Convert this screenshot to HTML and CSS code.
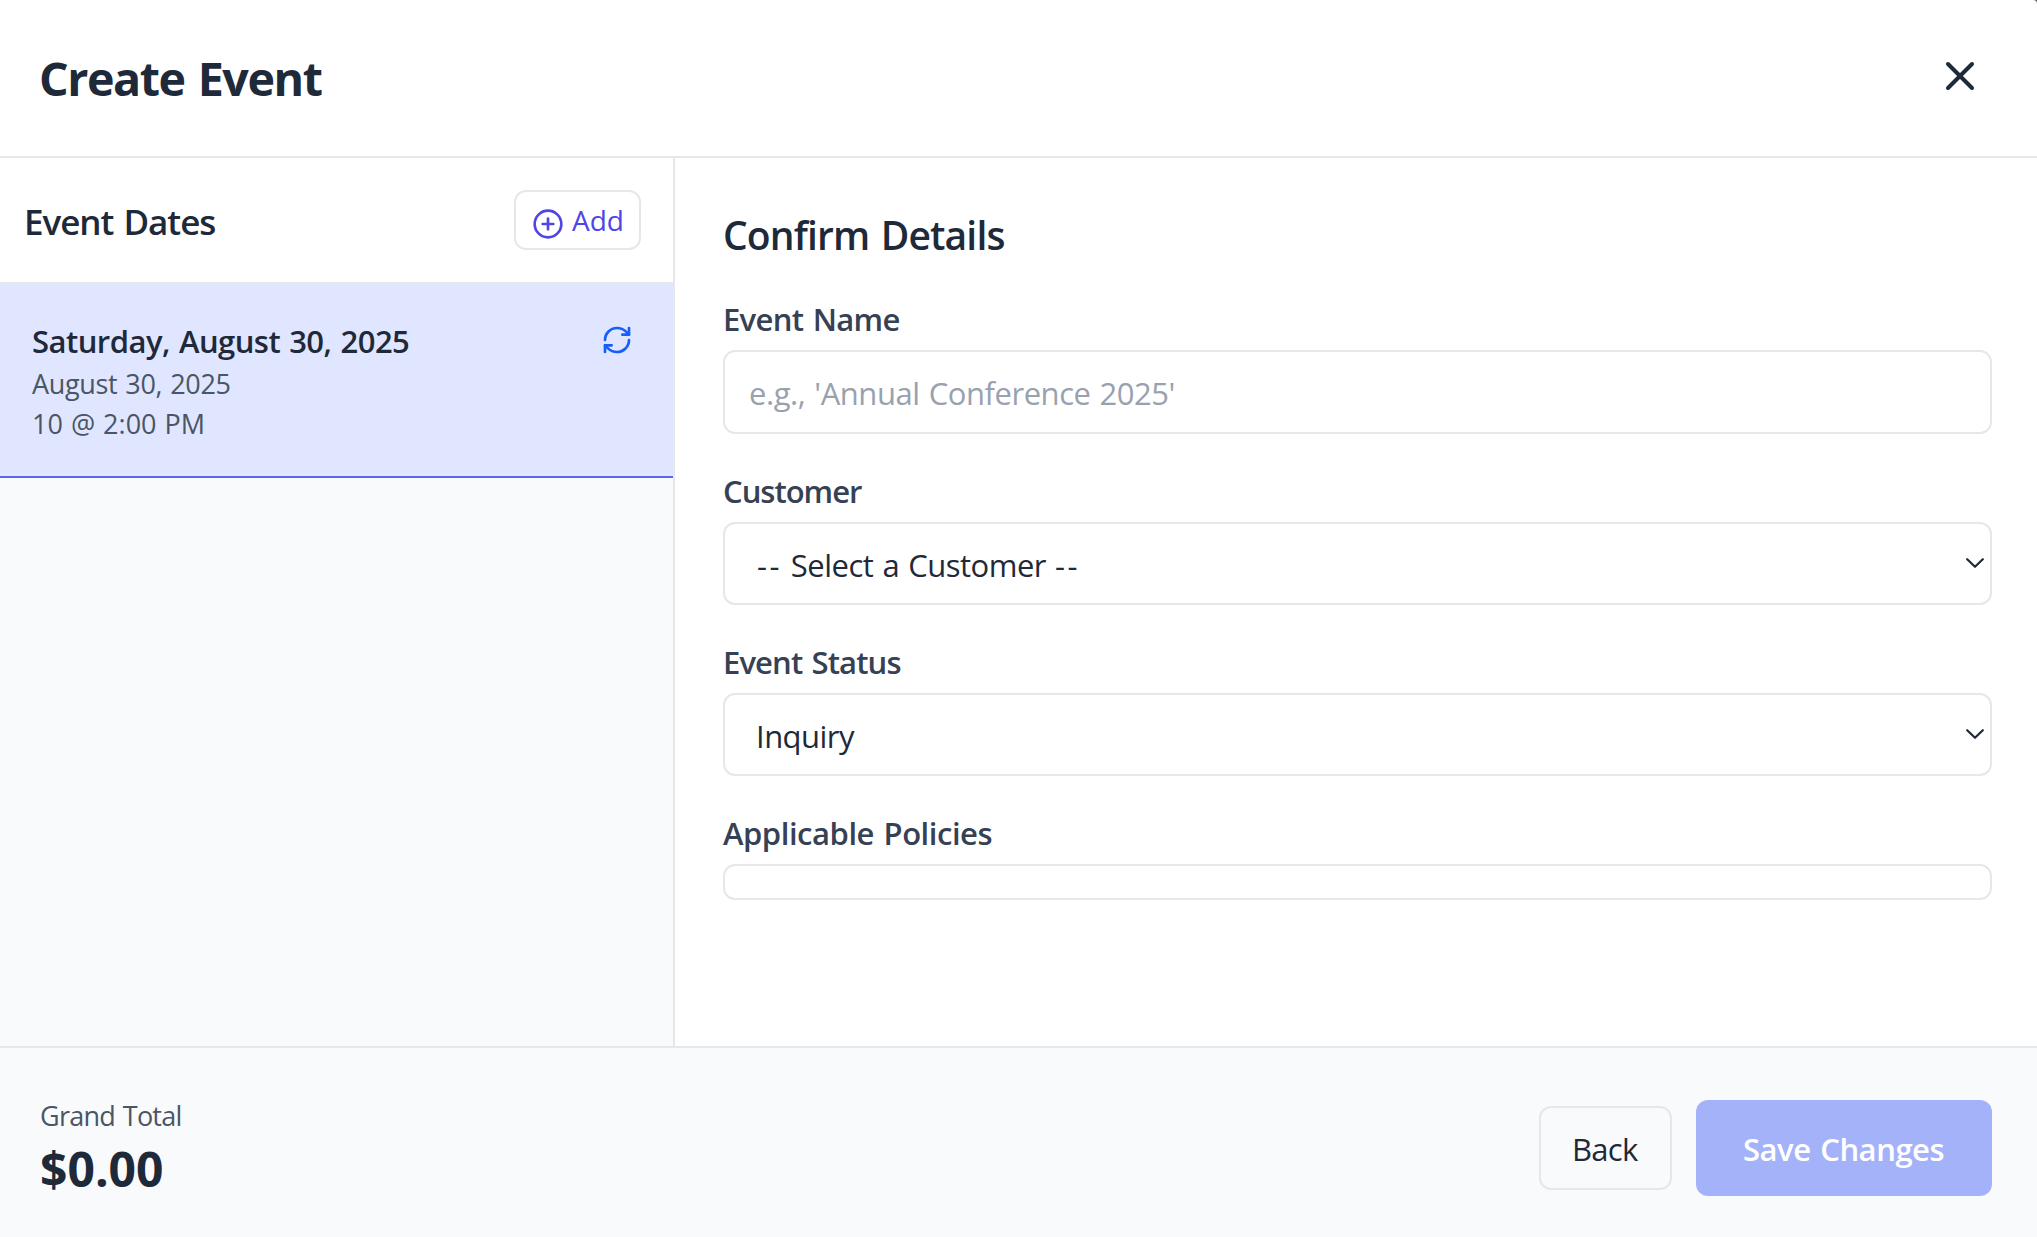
FILE: index.html
```
<!DOCTYPE html>
<html lang="en">
<head>
<meta charset="utf-8">
<title>Create Event</title>
<link rel="stylesheet" href="styles.css">
</head>
<body>
<div class="modal">
  <header class="header">
    <h1 class="title">Create Event</h1>
    <button class="close" aria-label="Close">
      <svg class="icon icon-lg" viewBox="0 0 24 24"><path d="M18 6 6 18M6 6l12 12"/></svg>
    </button>
  </header>
  <div class="body">
    <aside class="sidebar">
      <div class="sidebar-head">
        <h2 class="sidebar-title">Event Dates</h2>
        <button class="add">
          <svg class="icon add-icon" viewBox="0 0 24 24"><circle cx="12" cy="12" r="10"/><path d="M8 12h8M12 8v8"/></svg>
          <span>Add</span>
        </button>
      </div>
      <div class="date-item">
        <div>
          <div class="date-name">Saturday, August 30, 2025</div>
          <div class="date-meta date-day">August 30, 2025</div>
          <div class="date-meta date-time">10 @ 2:00 PM</div>
        </div>
        <svg class="icon refresh" viewBox="0 0 24 24"><path d="M3 12a9 9 0 0 1 9-9 9.75 9.75 0 0 1 6.74 2.74L21 8"/><path d="M21 3v5h-5"/><path d="M21 12a9 9 0 0 1-9 9 9.75 9.75 0 0 1-6.74-2.74L3 16"/><path d="M8 16H3v5"/></svg>
      </div>
    </aside>
    <main class="main">
      <h2 class="section-title">Confirm Details</h2>
      <div class="field">
        <label class="label label-name" for="name">Event Name</label>
        <input class="control input" id="name" placeholder="e.g., 'Annual Conference 2025'">
      </div>
      <div class="field">
        <div class="label label-customer">Customer</div>
        <div class="control select" role="combobox" tabindex="0">
          <span class="value-customer"><span class="dashes">--</span> Select a Customer <span class="dashes">--</span></span>
          <svg class="chevron" viewBox="0 0 18 10"><path d="M1.2 1.2 9 8.8l7.8-7.6"/></svg>
        </div>
      </div>
      <div class="field">
        <div class="label label-status">Event Status</div>
        <div class="control select" role="combobox" tabindex="0">
          <span class="value-status">Inquiry</span>
          <svg class="chevron" viewBox="0 0 18 10"><path d="M1.2 1.2 9 8.8l7.8-7.6"/></svg>
        </div>
      </div>
      <div class="field">
        <div class="label label-policies">Applicable Policies</div>
        <div class="control policies"></div>
      </div>
    </main>
  </div>
  <footer class="footer">
    <div>
      <div class="total-label">Grand Total</div>
      <div class="total">$0.00</div>
    </div>
    <div class="actions">
      <button class="back">Back</button>
      <button class="save">Save Changes</button>
    </div>
  </footer>
</div>
</body>
</html>
```
FILE: styles.css
```
* { box-sizing: border-box; margin: 0; padding: 0; }
body {
  background: #5c5c5c;
  color: #1e2939;
  font-family: "Open Sans", "Noto Sans", sans-serif;
  font-size: 31px;
  line-height: 48px;
}
button, input { font: inherit; color: inherit; background: none; border: 0; }
.modal {
  display: flex;
  flex-direction: column;
  height: 1237px;
  background: #fff;
  border-top-right-radius: 4px;
  overflow: hidden;
}
.icon {
  display: block;
  flex: none;
  width: 32px;
  height: 32px;
  fill: none;
  stroke: currentColor;
  stroke-width: 2;
  stroke-linecap: round;
  stroke-linejoin: round;
}
.icon-lg { width: 48px; height: 48px; }

.header {
  display: flex;
  justify-content: space-between;
  align-items: flex-start;
  height: 158px;
  padding: 40px 53px 0 39px;
  border-bottom: 2px solid #e5e7eb;
}
.title { font-size: 46.6px; line-height: 77px; font-weight: 700; letter-spacing: -1.45px; word-spacing: 2.5px; }
.close { margin-top: 12px; }

.body { display: flex; height: 888px; }
.sidebar { width: 675px; background: #f9fafc; border-right: 2px solid #e5e7eb; }
.sidebar-head {
  display: flex;
  justify-content: space-between;
  align-items: center;
  height: 126px;
  padding: 0 32px 0 24px;
  background: #fff;
  border-bottom: 2px solid #e5e7eb;
}
.sidebar-title { padding-top: 3px; font-size: 35px; font-weight: 600; letter-spacing: -1.02px; word-spacing: 2px; }
.add {
  display: flex;
  align-items: center;
  gap: 8px;
  width: 127px;
  height: 60px;
  padding-left: 16px;
  border: 2px solid #e5e7eb;
  border-radius: 12px;
  color: #4f46e5;
  font-size: 28px;
  line-height: 40px;
}
.add-icon { margin-top: 8px; }
.date-item {
  display: flex;
  justify-content: space-between;
  height: 194px;
  padding: 32px 40px 32px 32px;
  background: #e0e6ff;
  border-bottom: 2px solid #5f65e8;
}
.date-name { height: 48px; padding-top: 1px; font-weight: 600; letter-spacing: -0.53px; word-spacing: 1.5px; }
.date-meta { font-size: 27px; line-height: 40px; color: #4a5565; }
.date-day { letter-spacing: -0.36px; word-spacing: 1.5px; }
.date-time { word-spacing: 1px; }
.refresh { margin-top: 8px; color: #155dfc; }

.main { flex: 1; padding: 48px 45px 0 48px; }
.section-title {
  height: 56px;
  margin-bottom: 32px;
  padding-top: 1px;
  font-size: 39px;
  line-height: 56px;
  font-weight: 600;
  letter-spacing: -0.85px;
  word-spacing: 2px;
}
.field { margin-bottom: 32px; }
.label { display: block; height: 48px; margin-bottom: 8px; padding-top: 1px; color: #364153; font-weight: 600; word-spacing: 2px; }
.label-name { letter-spacing: -0.68px; }
.label-customer { letter-spacing: -1px; }
.label-status { letter-spacing: -0.87px; }
.label-policies { letter-spacing: -0.46px; }
.control { display: block; width: 100%; border: 2px solid #e5e7eb; border-radius: 12px; background: #fff; }
.input { height: 84px; padding: 1px 24px 0; letter-spacing: -0.46px; word-spacing: 1.5px; }
.input::placeholder { color: #99a1af; opacity: 1; }
.select {
  display: flex;
  align-items: center;
  justify-content: space-between;
  height: 83px;
  padding: 2px 6px 0 31px;
}
.value-customer { padding-left: 1px; letter-spacing: -0.5px; word-spacing: 1.5px; }
.dashes { letter-spacing: 2.4px; }
.value-status { letter-spacing: -0.53px; }
.chevron {
  width: 18px;
  height: 10px;
  margin-bottom: 4px;
  fill: none;
  stroke: #1e2939;
  stroke-width: 2.2;
  stroke-linecap: round;
  stroke-linejoin: round;
}
.policies { height: 36px; }

.footer {
  display: flex;
  justify-content: space-between;
  flex: 1;
  padding: 48px 45px 0 40px;
  background: #f9fafc;
  border-top: 2px solid #e5e7eb;
}
.total-label { font-size: 27px; line-height: 40px; color: #4a5565; letter-spacing: -0.75px; word-spacing: 1.5px; }
.total { font-size: 48px; line-height: 66px; font-weight: 700; }
.actions { display: flex; align-items: center; align-self: flex-start; gap: 24px; height: 104px; }
.back {
  width: 133px;
  height: 84px;
  padding: 1px 0 0 31px;
  border: 2px solid #e5e7eb;
  border-radius: 12px;
  text-align: left;
  letter-spacing: -0.73px;
}
.save {
  width: 296px;
  height: 96px;
  padding: 1px 0 0 47px;
  border-radius: 12px;
  background: #a4b3f9;
  color: #fff;
  font-weight: 600;
  text-align: left;
  letter-spacing: -0.46px;
  word-spacing: 2px;
}
```
